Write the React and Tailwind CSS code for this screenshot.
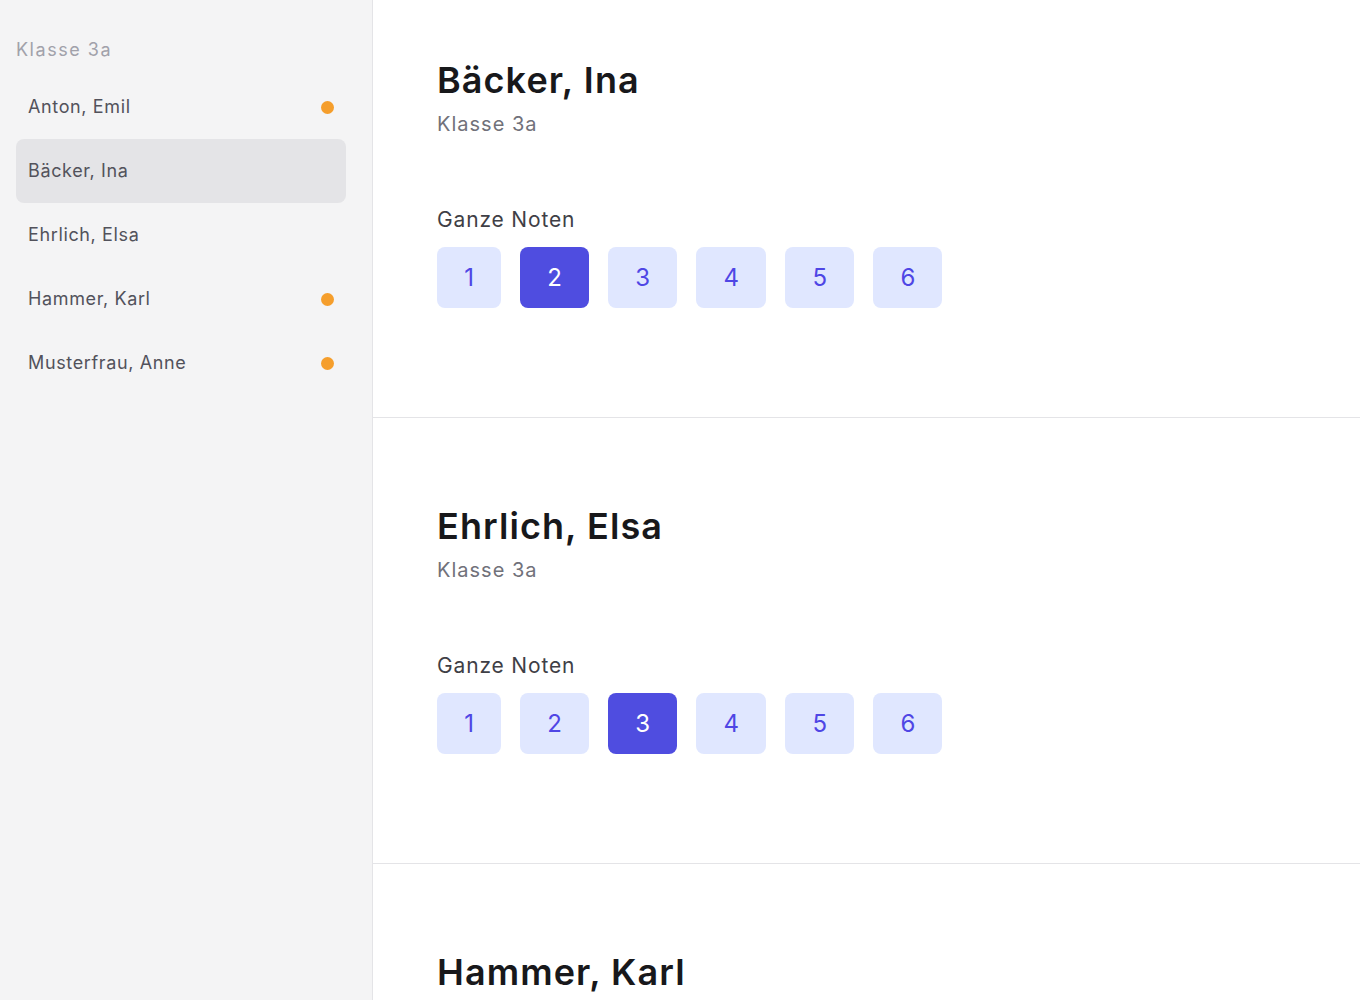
import React from "react";

const students = [
  { name: "Anton, Emil", dot: true },
  { name: "Bäcker, Ina", dot: false, active: true },
  { name: "Ehrlich, Elsa", dot: false },
  { name: "Hammer, Karl", dot: true },
  { name: "Musterfrau, Anne", dot: true },
];

function Grades({ selected }) {
  return (
    <div className="flex gap-[19px] mt-[13px]">
      {[1, 2, 3, 4, 5, 6].map((n) => (
        <button
          key={n}
          className={
            n === selected
              ? "h-[61px] px-[27.2px] rounded-lg text-2xl leading-8 tracking-normal bg-[#4f4de0] text-white"
              : "h-[61px] px-[27.2px] rounded-lg text-2xl leading-8 tracking-normal bg-[#e0e7ff] text-[#4f46e5]"
          }
        >
          {n}
        </button>
      ))}
    </div>
  );
}

function Section({ name, selected, first, last }) {
  return (
    <section
      className={
        (first ? "pt-[60px] " : "pt-[88px] ") +
        (last ? "" : "pb-[109px] border-b border-[#e4e4e7] ") +
        "px-16"
      }
    >
      <h1 className="text-4xl leading-10 font-semibold tracking-[0.03em] text-[#18181b]">{name}</h1>
      <p className="mt-[10px] text-xl leading-7 tracking-[0.05em] text-[#71717a]">Klasse 3a</p>
      {selected !== undefined && (
        <>
          <h2 className="mt-[68px] text-[21px] leading-7 tracking-[0.04em] text-[#3f3f46]">Ganze Noten</h2>
          <Grades selected={selected} />
        </>
      )}
    </section>
  );
}

export default function App() {
  return (
    <div
      className="flex h-[1000px] w-[1360px] overflow-hidden bg-white"
      style={{ fontFamily: "Inter, 'Noto Sans', sans-serif" }}
    >
      <aside className="w-[373px] shrink-0 bg-[#f4f4f5] border-r border-[#e4e4e7] px-4 pt-[39px]">
        <div className="text-lg leading-[22px] tracking-[0.085em] text-[#a1a1aa]">Klasse 3a</div>
        <ul className="mt-[14px] w-[330px]">
          {students.map((s) => (
            <li
              key={s.name}
              className={
                "h-16 px-3 flex items-center justify-between rounded-lg text-lg tracking-[0.035em] text-[#52525b] " +
                (s.active ? "bg-[#e4e4e7]" : "")
              }
            >
              <span>{s.name}</span>
              {s.dot && <span className="w-[13px] h-[13px] rounded-full bg-[#f59e2c]" />}
            </li>
          ))}
        </ul>
      </aside>
      <main className="flex-1 overflow-hidden">
        <Section name="Bäcker, Ina" selected={2} first />
        <Section name="Ehrlich, Elsa" selected={3} />
        <Section name="Hammer, Karl" last />
      </main>
    </div>
  );
}
